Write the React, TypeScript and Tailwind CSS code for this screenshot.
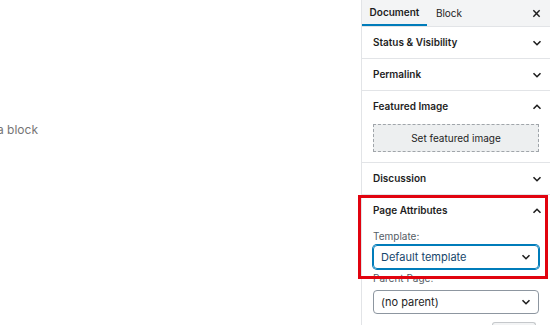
import React from 'react';

const font = { fontFamily: 'Inter, "Noto Sans", sans-serif' };

const Chevron: React.FC<{ up?: boolean }> = ({ up }) => (
  <svg width="10" height="10" viewBox="0 0 10 10" className={up ? 'rotate-180' : ''}>
    <path d="M1.5 3.2 L5 6.7 L8.5 3.2" fill="none" stroke="#1e1e1e" strokeWidth="1.6" />
  </svg>
);

const PanelHeader: React.FC<{ title: string; open?: boolean }> = ({ title, open }) => (
  <div className="flex h-[31px] shrink-0 items-center justify-between pl-[11px] pr-[8px]">
    <span className="text-[10px] font-semibold text-[#1e1e1e]">{title}</span>
    <Chevron up={open} />
  </div>
);

const App: React.FC = () => {
  return (
    <div className="relative flex h-[325px] w-[550px] overflow-hidden bg-white" style={font}>
      {/* Editor canvas */}
      <div className="flex-1 pt-[121px]">
        <p className="-ml-[3px] text-[12px] text-[#757575]">a block</p>
      </div>

      {/* Sidebar */}
      <div className="flex w-[189px] shrink-0 flex-col border-l border-[#e2e4e7]">
        <div className="flex h-[27px] shrink-0 items-stretch border-b border-[#e2e4e7] bg-[#f3f4f5]">
          <div className="flex w-[65px] items-center justify-center border-b-2 border-[#007cba] text-[10px] font-semibold text-[#1e1e1e]">
            Document
          </div>
          <div className="flex w-[44px] items-center justify-center text-[10px] text-[#1e1e1e]">Block</div>
          <div className="ml-auto flex items-center pr-[9px]">
            <svg width="9" height="9" viewBox="0 0 10 10">
              <path d="M1.5 1.5 L8.5 8.5 M8.5 1.5 L1.5 8.5" stroke="#1e1e1e" strokeWidth="1.6" />
            </svg>
          </div>
        </div>

        <div className="shrink-0 border-b border-[#e2e4e7]">
          <PanelHeader title="Status & Visibility" />
        </div>
        <div className="shrink-0 border-b border-[#e2e4e7]">
          <PanelHeader title="Permalink" />
        </div>
        <div className="shrink-0 border-b border-[#e2e4e7] pb-[10px]">
          <PanelHeader title="Featured Image" open />
          <div className="mx-[11px] mt-[2px] flex h-[28px] items-center justify-center border border-dashed border-[#a0a5aa] bg-[#edeff0] text-[10px] text-[#1e1e1e]">
            Set featured image
          </div>
        </div>
        <div className="shrink-0 border-b border-[#e2e4e7]">
          <PanelHeader title="Discussion" />
        </div>
        <div className="shrink-0">
          <PanelHeader title="Page Attributes" open />
          <div className="px-[11px]">
            <div className="mt-[3px] text-[10px] leading-[15px] text-[#555d66]">Template:</div>
            <div className="mt-[1px] flex h-[24px] items-center justify-between rounded-[4px] border border-[#007cba] pl-[7px] pr-[7px] text-[11px] text-[#16466b] shadow-[0_0_0_1px_#007cba]">
              <span>Default template</span>
              <Chevron />
            </div>
            <div className="mt-[2px] text-[10px] leading-[15px] text-[#555d66]">Parent Page:</div>
            <div className="mt-[4px] flex h-[24px] items-center justify-between rounded-[4px] border border-[#8d96a0] pl-[7px] pr-[7px] text-[11px] text-[#1e1e1e]">
              <span>(no parent)</span>
              <Chevron />
            </div>
            <div className="mt-[8px] flex justify-end pr-[3px]">
              <div className="h-[10px] w-[44px] rounded-t-[3px] border border-b-0 border-[#c5c8cb] bg-[#f3f4f5]" />
            </div>
          </div>
        </div>
      </div>

      {/* Annotation overlay */}
      <div className="pointer-events-none absolute left-[358px] top-[195px] h-[84px] w-[190px] border-[3px] border-[#e1030f]" />
    </div>
  );
};

export default App;
